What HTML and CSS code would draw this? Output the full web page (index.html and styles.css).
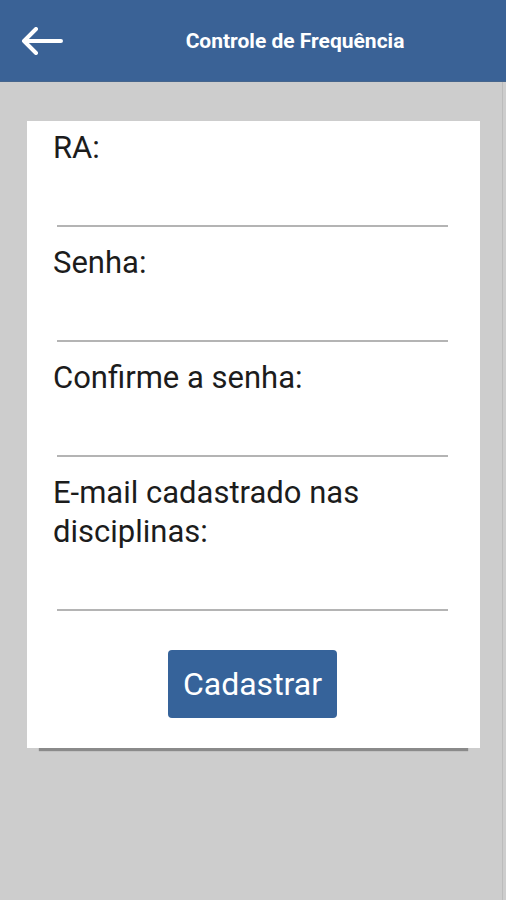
FILE: index.html
```html
<!DOCTYPE html>
<html lang="pt-BR">
<head>
    <meta charset="UTF-8">
    <meta name="viewport" content="width=device-width, initial-scale=1.0">
    <title>Controle de Frequência</title>
    <link rel="stylesheet" href="styles.css">
</head>
<body>
    <header class="toolbar">
        <div class="toolbar-nav">
            <svg class="back-icon" width="42" height="28" viewBox="0 0 42 28">
                <path d="M3 14H40M15 2L3 14L15 26" fill="none" stroke="#ffffff" stroke-width="4" stroke-linecap="round" stroke-linejoin="round"/>
            </svg>
        </div>
        <h1 class="toolbar-title">Controle de Frequência</h1>
    </header>

    <main class="content">
        <form class="card">
            <div class="field">
                <label class="field-label">RA:</label>
                <div class="field-line"></div>
            </div>
            <div class="field">
                <label class="field-label">Senha:</label>
                <div class="field-line"></div>
            </div>
            <div class="field">
                <label class="field-label">Confirme a senha:</label>
                <div class="field-line"></div>
            </div>
            <div class="field">
                <label class="field-label">E-mail cadastrado nas disciplinas:</label>
                <div class="field-line"></div>
            </div>
            <div class="actions">
                <button type="button" class="btn">Cadastrar</button>
            </div>
        </form>
    </main>
</body>
</html>
```

FILE: styles.css
```css
body {
    font-family: Roboto, "Liberation Sans", sans-serif;
    margin: 0;
    padding: 0;
    min-height: 900px;
    background: linear-gradient(to right, #cdcdcd 502px, #bcbcbc 502px, #bcbcbc 503px, #cdcdcd 503px);
}
.toolbar {
    background-color: #3a6296;
    height: 82px;
    display: flex;
    align-items: center;
    border-bottom: 1px solid #46658c;
    box-sizing: border-box;
}
.toolbar-nav {
    width: 84px;
    display: flex;
    align-items: center;
    padding-left: 21px;
    box-sizing: border-box;
}
.back-icon {
    display: block;
}
.toolbar-title {
    flex: 1;
    margin: 0;
    text-align: center;
    color: #ffffff;
    font-size: 21px;
    font-weight: bold;
}
.content {
    padding: 39px 26px 0 27px;
}
.card {
    background: #ffffff;
    padding: 7px 32px 30px 26px;
    box-shadow: 0 15px 1px -12px #8a8a8a;
}
.field {
    margin-bottom: 16px;
}
.field-label {
    display: block;
    font-size: 31px;
    line-height: 39px;
    color: #1c1c1c;
    margin-bottom: 58px;
}
.field-line {
    height: 2px;
    margin-left: 4px;
    background-color: #b4b4b4;
}
.actions {
    display: flex;
    justify-content: center;
    padding-top: 23px;
    padding-left: 4px;
}
.btn {
    width: 169px;
    height: 68px;
    background-color: #36639a;
    color: #ffffff;
    border: none;
    border-radius: 4px;
    font-family: Roboto, "Liberation Sans", sans-serif;
    font-size: 32px;
    padding: 0;
}
```
